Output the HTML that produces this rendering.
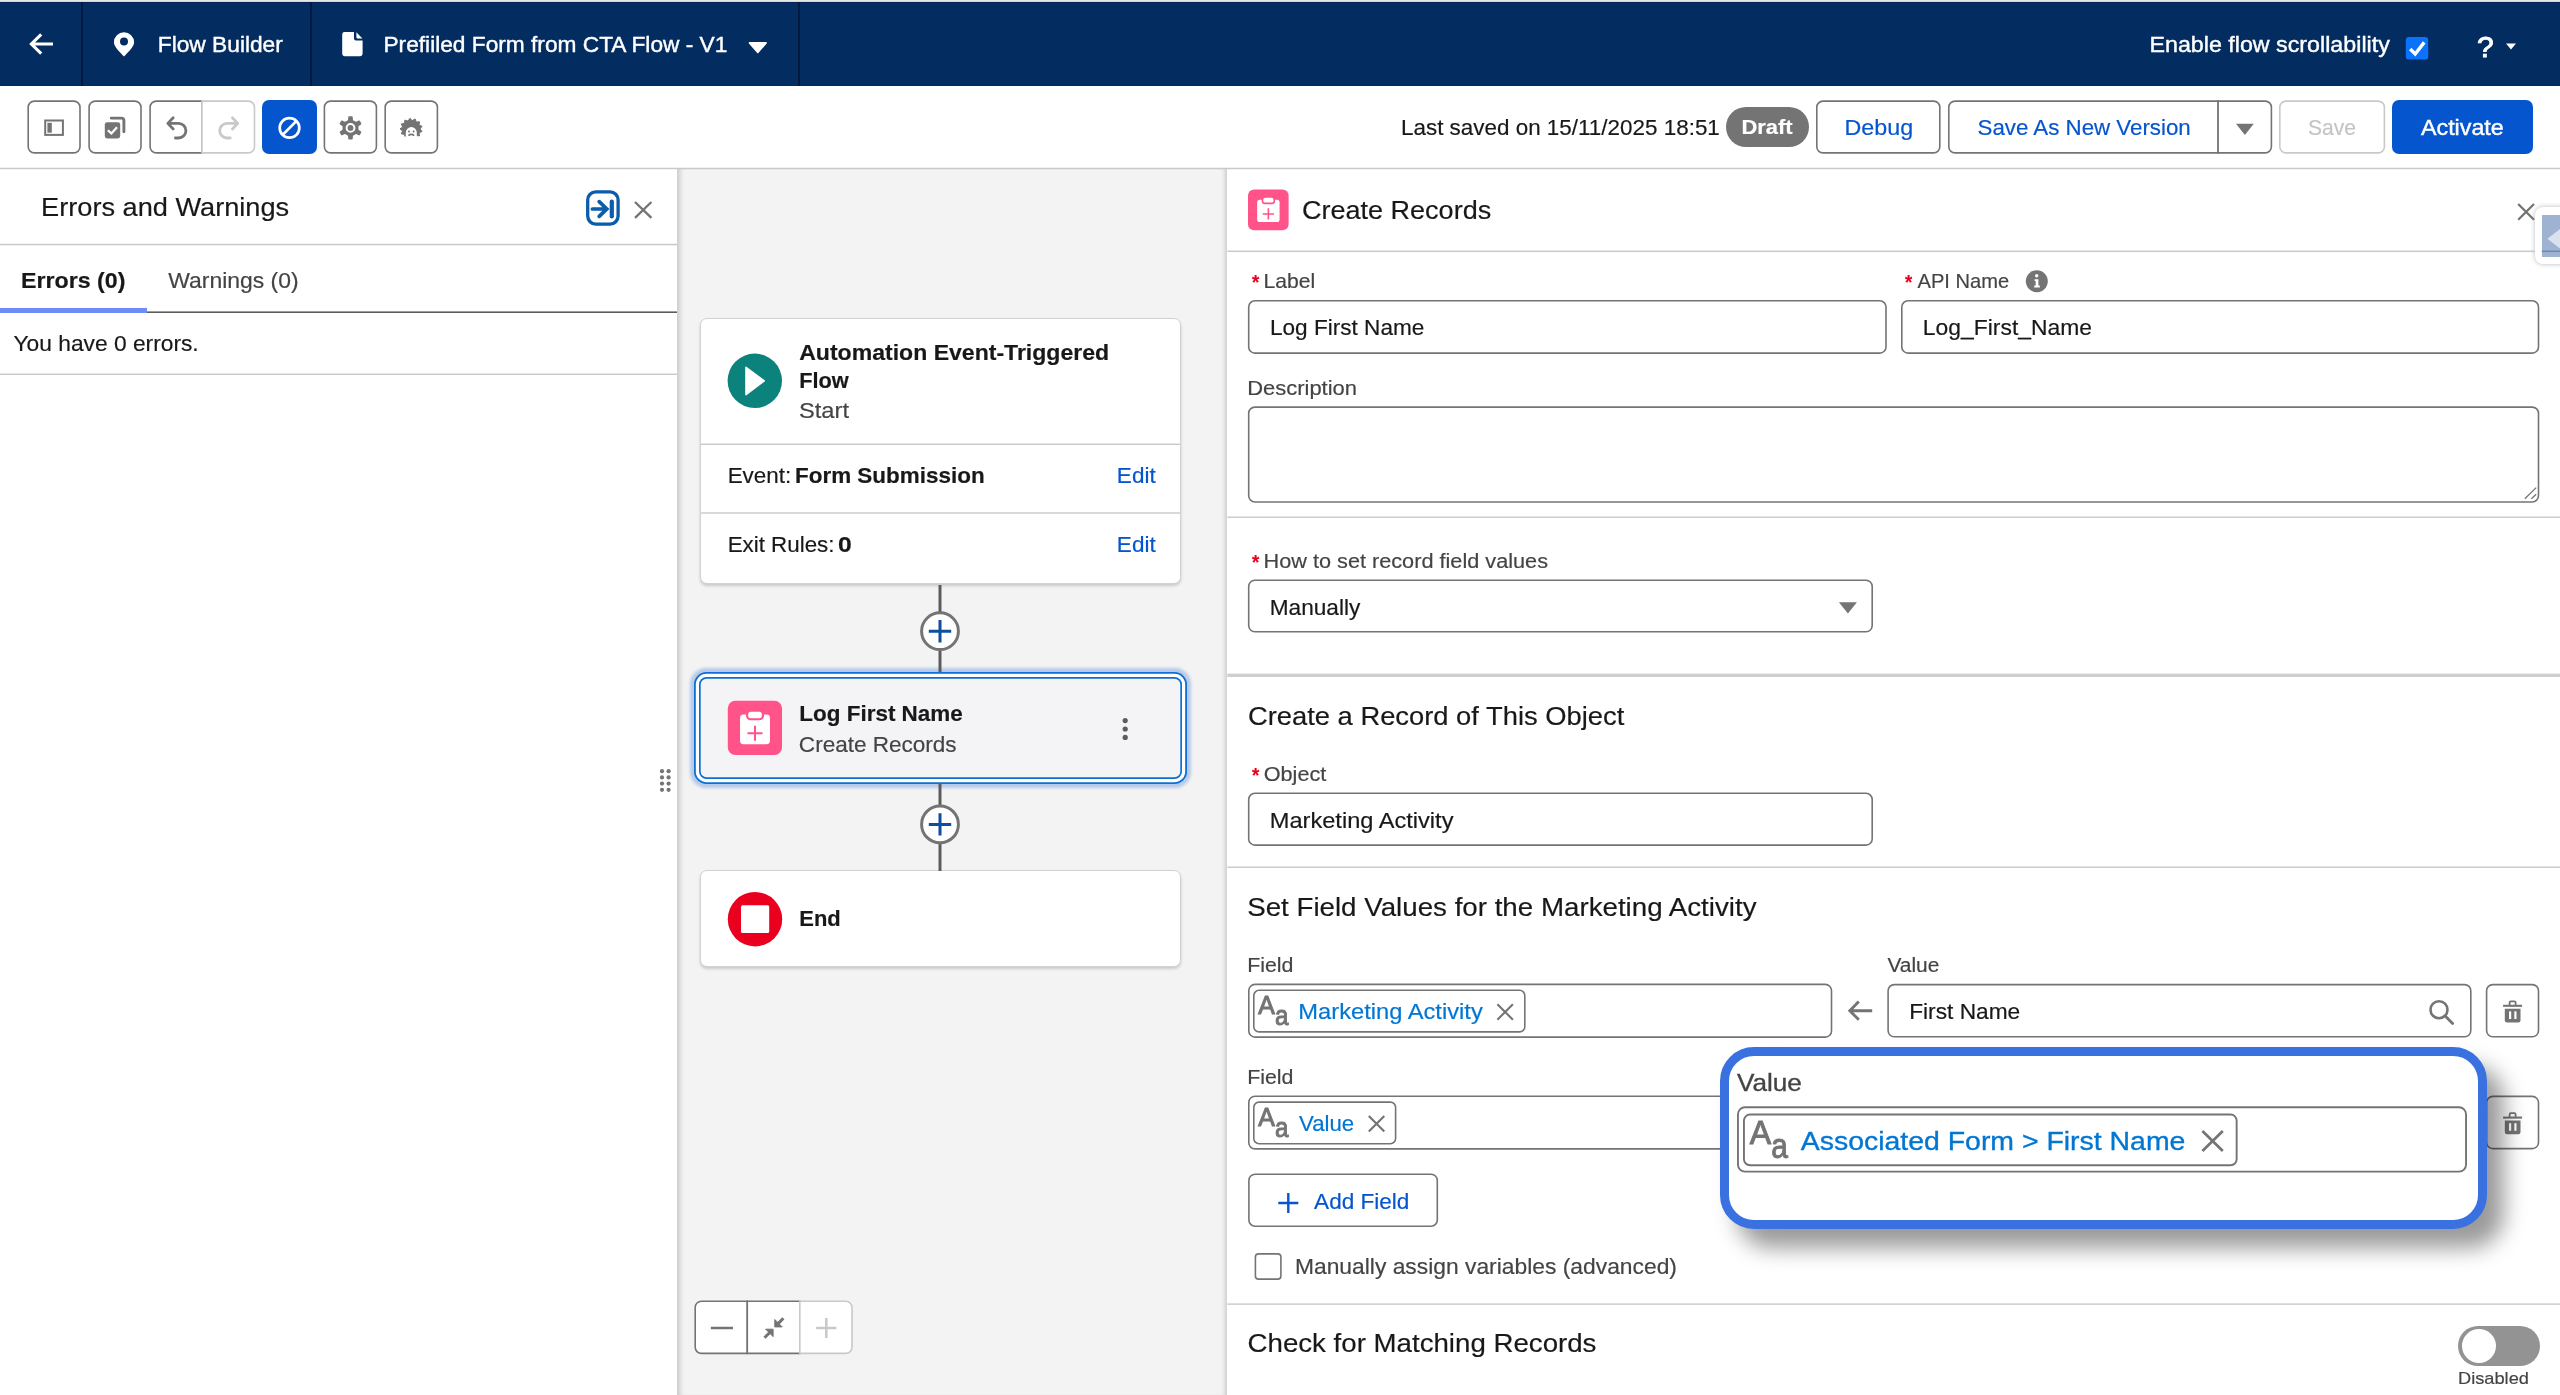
<!DOCTYPE html>
<html lang="en"><head><meta charset="utf-8"><title>Flow Builder</title>
<style>

html,body{margin:0;padding:0;background:#fff}
body{width:2560px;height:1395px;overflow:hidden;font-family:"Liberation Sans",sans-serif}
#root{position:relative;width:2560px;height:1395px;overflow:hidden;background:#fff}
.a{position:absolute;box-sizing:border-box}
.t{position:absolute;white-space:nowrap;transform-origin:0 0;display:block;will-change:transform;-webkit-text-stroke:.18px currentColor}
.ov{position:absolute;left:0;top:0;pointer-events:none}
.tx{font-family:"Liberation Sans",sans-serif;will-change:transform}
.tx text{white-space:pre}
.ln{position:absolute;background:#c9c9c9}
.inp,.btn{position:absolute;box-sizing:border-box;border-radius:7px;background:#fff;--bc:#747474;--bw:1.6px;box-shadow:inset 0 0 0 var(--bw) var(--bc)}
.card{position:absolute;box-sizing:border-box;background:#fff;border:1px solid #d2d2d2;border-radius:7px;box-shadow:0 2px 3px rgba(0,0,0,.17)}

</style></head>
<body>
<div id="root">
<div class="a" style="left:0px;top:0px;width:2560.00px;height:86.00px;background:#032d60"></div>
<div class="a" style="left:0px;top:0px;width:2560.00px;height:2.00px;background:linear-gradient(#e6e6e4 0,#e6e6e4 70%,#7f8ea8 100%)"></div>
<div class="a" style="left:0px;top:2px;width:2560.00px;height:1.00px;background:#01235a"></div>
<div class="a" style="left:81px;top:2px;width:2.00px;height:84.00px;background:#01183f"></div>
<div class="a" style="left:309.6px;top:2px;width:2.00px;height:84.00px;background:#01183f"></div>
<div class="a" style="left:797.6px;top:2px;width:2.00px;height:84.00px;background:#01183f"></div>







<div class="a" style="left:262.4px;top:99.9px;width:54.30px;height:54.20px;background:#0555ce;border-radius:7px"></div>
<div class="a" style="left:1726px;top:106.8px;width:82.80px;height:40.20px;background:#747474;border-radius:21px"></div>




<div class="a" style="left:2392.4px;top:99.9px;width:140.60px;height:54.20px;background:#0555ce;border-radius:7px"></div>


<div class="a" style="left:0px;top:308px;width:147.00px;height:5.20px;background:#6f8cf6"></div>

<div class="a" style="left:677px;top:168.6px;width:550.40px;height:1226.40px;background:#f3f3f3;box-shadow:inset 7px 0 5px -4px rgba(0,0,0,.17),inset -5px 0 4px -3px rgba(0,0,0,.17)"></div>
<div class="card" style="left:700px;top:317.8px;width:481.00px;height:266.40px;"></div>


<div class="a" style="left:699.2px;top:677px;width:483.00px;height:102.00px;background:#f4f4f7;border-radius:7.5px;box-shadow:inset 0 0 0 1.7px #0b6fd3,0 0 0 3.2px #fff,0 0 0 5px #0b6fd3,0 0 3px 8.6px rgba(45,110,215,.3)"></div>
<div class="card" style="left:700px;top:870.4px;width:481.00px;height:96.20px;"></div>
























<div class="a" style="left:2458px;top:1325.6px;width:81.80px;height:40.20px;background:#939393;border-radius:21px"></div>
<div class="a" style="left:2461.6px;top:1328.6px;width:34.40px;height:34.20px;background:#fff;border-radius:50%"></div>
<div class="a" style="left:2534.8px;top:206.8px;width:45.20px;height:57.40px;background:#fff;border-radius:8px;box-shadow:0 0 5px rgba(0,0,0,.28)"></div>
<div class="a" style="left:2541.6px;top:215px;width:18.40px;height:41.60px;background:rgba(120,148,192,.72)"></div>
<svg class="ov" width="2560" height="1395" viewBox="0 0 2560 1395">
<rect x="0" y="167.75" width="2560" height="1.5" fill="#c9c9c9"/>
<rect x="0" y="243.8" width="677" height="1.5" fill="#c9c9c9"/>
<rect x="147" y="311.4" width="530" height="1.6" fill="#5c5c5c"/>
<rect x="0" y="373.6" width="677" height="1.4" fill="#c9c9c9"/>
<rect x="701" y="443.6" width="479" height="1.4" fill="#c9c9c9"/>
<rect x="701" y="512.3" width="479" height="1.4" fill="#c9c9c9"/>
<rect x="1227.4" y="250.55" width="1307.6" height="1.5" fill="#c9c9c9"/>
<rect x="2541.6" y="250.55" width="18.40000000000009" height="1.5" fill="rgba(60,85,130,.45)"/>
<rect x="1227.4" y="516.5" width="1332.6" height="1.4" fill="#c9c9c9"/>
<rect x="1227.4" y="673.6" width="1332.6" height="3.4" fill="#cfcfcf"/>
<rect x="1227.4" y="866.5" width="1332.6" height="1.4" fill="#c9c9c9"/>
<rect x="1227.4" y="1303.4" width="1332.6" height="1.4" fill="#c9c9c9"/>
<path d="M34.40 101.10H73.80A6.2 6.2 0 0 1 80.00 107.30V146.70A6.2 6.2 0 0 1 73.80 152.90H34.40A6.2 6.2 0 0 1 28.20 146.70V107.30A6.2 6.2 0 0 1 34.40 101.10Z" fill="#fff" stroke="#747474" stroke-width="1.6"/>
<path d="M95.30 101.10H134.80A6.2 6.2 0 0 1 141.00 107.30V146.70A6.2 6.2 0 0 1 134.80 152.90H95.30A6.2 6.2 0 0 1 89.10 146.70V107.30A6.2 6.2 0 0 1 95.30 101.10Z" fill="#fff" stroke="#747474" stroke-width="1.6"/>
<path d="M330.60 101.10H370.20A6.2 6.2 0 0 1 376.40 107.30V146.70A6.2 6.2 0 0 1 370.20 152.90H330.60A6.2 6.2 0 0 1 324.40 146.70V107.30A6.2 6.2 0 0 1 330.60 101.10Z" fill="#fff" stroke="#747474" stroke-width="1.6"/>
<path d="M391.40 101.10H431.20A6.2 6.2 0 0 1 437.40 107.30V146.70A6.2 6.2 0 0 1 431.20 152.90H391.40A6.2 6.2 0 0 1 385.20 146.70V107.30A6.2 6.2 0 0 1 391.40 101.10Z" fill="#fff" stroke="#747474" stroke-width="1.6"/>
<path d="M156.30 101.10H201.90V152.90H156.30A6.2 6.2 0 0 1 150.10 146.70V107.30A6.2 6.2 0 0 1 156.30 101.10Z" fill="#fff" stroke="#747474" stroke-width="1.6"/>
<path d="M201.90 101.10H248.30A6.2 6.2 0 0 1 254.50 107.30V146.70A6.2 6.2 0 0 1 248.30 152.90H201.90V101.10Z" fill="#fff" stroke="#c9c9c9" stroke-width="1.6"/>
<path d="M1823.00 101.10H1933.60A6.2 6.2 0 0 1 1939.80 107.30V146.70A6.2 6.2 0 0 1 1933.60 152.90H1823.00A6.2 6.2 0 0 1 1816.80 146.70V107.30A6.2 6.2 0 0 1 1823.00 101.10Z" fill="#fff" stroke="#747474" stroke-width="1.6"/>
<path d="M1955.00 101.10H2218.10V152.90H1955.00A6.2 6.2 0 0 1 1948.80 146.70V107.30A6.2 6.2 0 0 1 1955.00 101.10Z" fill="#fff" stroke="#747474" stroke-width="1.6"/>
<path d="M2218.10 101.10H2265.20A6.2 6.2 0 0 1 2271.40 107.30V146.70A6.2 6.2 0 0 1 2265.20 152.90H2218.10V101.10Z" fill="#fff" stroke="#747474" stroke-width="1.6"/>
<path d="M2286.00 101.10H2378.20A6.2 6.2 0 0 1 2384.40 107.30V146.70A6.2 6.2 0 0 1 2378.20 152.90H2286.00A6.2 6.2 0 0 1 2279.80 146.70V107.30A6.2 6.2 0 0 1 2286.00 101.10Z" fill="#fff" stroke="#c9c9c9" stroke-width="1.6"/>
<path d="M701.40 1301.20H747.30V1353.40H701.40A6.2 6.2 0 0 1 695.20 1347.20V1307.40A6.2 6.2 0 0 1 701.40 1301.20Z" fill="#fff" stroke="#747474" stroke-width="1.6"/>
<path d="M747.30 1301.20H799.80V1353.40H747.30V1301.20Z" fill="#fff" stroke="#747474" stroke-width="1.6"/>
<path d="M799.80 1301.20H845.80A6.2 6.2 0 0 1 852.00 1307.40V1347.20A6.2 6.2 0 0 1 845.80 1353.40H799.80V1301.20Z" fill="#fff" stroke="#c9c9c9" stroke-width="1.6"/>
<path d="M1254.90 300.80H1879.80A6.2 6.2 0 0 1 1886.00 307.00V346.90A6.2 6.2 0 0 1 1879.80 353.10H1254.90A6.2 6.2 0 0 1 1248.70 346.90V307.00A6.2 6.2 0 0 1 1254.90 300.80Z" fill="#fff" stroke="#747474" stroke-width="1.6"/>
<path d="M1908.00 300.80H2532.30A6.2 6.2 0 0 1 2538.50 307.00V346.90A6.2 6.2 0 0 1 2532.30 353.10H1908.00A6.2 6.2 0 0 1 1901.80 346.90V307.00A6.2 6.2 0 0 1 1908.00 300.80Z" fill="#fff" stroke="#747474" stroke-width="1.6"/>
<path d="M1254.90 407.10H2532.30A6.2 6.2 0 0 1 2538.50 413.30V495.80A6.2 6.2 0 0 1 2532.30 502.00H1254.90A6.2 6.2 0 0 1 1248.70 495.80V413.30A6.2 6.2 0 0 1 1254.90 407.10Z" fill="#fff" stroke="#747474" stroke-width="1.6"/>
<path d="M1254.90 580.20H1866.00A6.2 6.2 0 0 1 1872.20 586.40V625.60A6.2 6.2 0 0 1 1866.00 631.80H1254.90A6.2 6.2 0 0 1 1248.70 625.60V586.40A6.2 6.2 0 0 1 1254.90 580.20Z" fill="#fff" stroke="#747474" stroke-width="1.6"/>
<path d="M1254.90 793.30H1866.00A6.2 6.2 0 0 1 1872.20 799.50V838.90A6.2 6.2 0 0 1 1866.00 845.10H1254.90A6.2 6.2 0 0 1 1248.70 838.90V799.50A6.2 6.2 0 0 1 1254.90 793.30Z" fill="#fff" stroke="#747474" stroke-width="1.6"/>
<path d="M1255.00 984.40H1825.30A6.2 6.2 0 0 1 1831.50 990.60V1030.90A6.2 6.2 0 0 1 1825.30 1037.10H1255.00A6.2 6.2 0 0 1 1248.80 1030.90V990.60A6.2 6.2 0 0 1 1255.00 984.40Z" fill="#fff" stroke="#747474" stroke-width="1.6"/>
<path d="M1894.30 984.60H2464.60A6.2 6.2 0 0 1 2470.80 990.80V1030.60A6.2 6.2 0 0 1 2464.60 1036.80H1894.30A6.2 6.2 0 0 1 1888.10 1030.60V990.80A6.2 6.2 0 0 1 1894.30 984.60Z" fill="#fff" stroke="#747474" stroke-width="1.6"/>
<path d="M2492.80 984.60H2532.30A6.2 6.2 0 0 1 2538.50 990.80V1030.60A6.2 6.2 0 0 1 2532.30 1036.80H2492.80A6.2 6.2 0 0 1 2486.60 1030.60V990.80A6.2 6.2 0 0 1 2492.80 984.60Z" fill="#fff" stroke="#747474" stroke-width="1.6"/>
<path d="M1255.00 1096.20H1825.30A6.2 6.2 0 0 1 1831.50 1102.40V1142.70A6.2 6.2 0 0 1 1825.30 1148.90H1255.00A6.2 6.2 0 0 1 1248.80 1142.70V1102.40A6.2 6.2 0 0 1 1255.00 1096.20Z" fill="#fff" stroke="#747474" stroke-width="1.6"/>
<path d="M1894.30 1096.40H2464.60A6.2 6.2 0 0 1 2470.80 1102.60V1142.40A6.2 6.2 0 0 1 2464.60 1148.60H1894.30A6.2 6.2 0 0 1 1888.10 1142.40V1102.60A6.2 6.2 0 0 1 1894.30 1096.40Z" fill="#fff" stroke="#747474" stroke-width="1.6"/>
<path d="M2492.80 1096.40H2532.30A6.2 6.2 0 0 1 2538.50 1102.60V1142.40A6.2 6.2 0 0 1 2532.30 1148.60H2492.80A6.2 6.2 0 0 1 2486.60 1142.40V1102.60A6.2 6.2 0 0 1 2492.80 1096.40Z" fill="#fff" stroke="#747474" stroke-width="1.6"/>
<path d="M1259.00 990.30H1519.60A5.2 5.2 0 0 1 1524.80 995.50V1026.70A5.2 5.2 0 0 1 1519.60 1031.90H1259.00A5.2 5.2 0 0 1 1253.80 1026.70V995.50A5.2 5.2 0 0 1 1259.00 990.30Z" fill="#fff" stroke="#747474" stroke-width="1.6"/>
<path d="M1259.00 1102.10H1390.40A5.2 5.2 0 0 1 1395.60 1107.30V1138.50A5.2 5.2 0 0 1 1390.40 1143.70H1259.00A5.2 5.2 0 0 1 1253.80 1138.50V1107.30A5.2 5.2 0 0 1 1259.00 1102.10Z" fill="#fff" stroke="#747474" stroke-width="1.6"/>
<path d="M1255.10 1174.20H1431.10A6.2 6.2 0 0 1 1437.30 1180.40V1220.00A6.2 6.2 0 0 1 1431.10 1226.20H1255.10A6.2 6.2 0 0 1 1248.90 1220.00V1180.40A6.2 6.2 0 0 1 1255.10 1174.20Z" fill="#fff" stroke="#747474" stroke-width="1.6"/>
<path d="M1258.60 1253.90H1277.70A3.2 3.2 0 0 1 1280.90 1257.10V1275.90A3.2 3.2 0 0 1 1277.70 1279.10H1258.60A3.2 3.2 0 0 1 1255.40 1275.90V1257.10A3.2 3.2 0 0 1 1258.60 1253.90Z" fill="#fff" stroke="#747474" stroke-width="1.6"/>
<path d="M53 44H31M41.2 34.4L31.4 44L41.2 53.6" stroke="#fff" stroke-width="3.1" fill="none" stroke-linejoin="miter"/>
<path fill="#fff" fill-rule="evenodd" d="M124 56.4C121 53.2 113.9 46.6 113.9 42.4A10.1 10.1 0 0 1 134.1 42.4C134.1 46.6 127 53.2 124 56.4ZM124 37.6a4 4 0 1 0 0 8a4 4 0 1 0 0-8Z"/>
<path fill="#fff" d="M344.6 32h9.4v6.6a2 2 0 0 0 2 2h6.6v13.2a2.4 2.4 0 0 1-2.4 2.4h-15.6a2.4 2.4 0 0 1-2.4-2.4v-19.4a2.4 2.4 0 0 1 2.4-2.4ZM356.4 32.2l6 6.2h-4.8a1.2 1.2 0 0 1-1.2-1.2Z"/>
<path fill="#fff" d="M749.6 42h16.4a.9.9 0 0 1 .7 1.5l-8.1 9.3a1 1 0 0 1-1.6 0l-8.1-9.3a.9.9 0 0 1 .7-1.5Z"/>
<rect x="2405.8" y="37" width="22.4" height="22.6" rx="3.2" fill="#0b72fb"/>
<path d="M2410.2 49L2415.2 54L2424.2 42.4" stroke="#fff" stroke-width="3.4" fill="none"/>
<path fill="#fff" d="M2506 43.6h10l-5 6Z"/>
<rect x="45.2" y="120.5" width="17.7" height="14.4" fill="none" stroke="#747474" stroke-width="2"/>
<rect x="47.4" y="122.8" width="4.4" height="9.9" fill="#747474"/>
<path d="M111.2 118.1H121.3A2.6 2.6 0 0 1 123.9 120.7V131.8" stroke="#747474" stroke-width="2.9" fill="none" stroke-linecap="round"/>
<rect x="104.8" y="122.2" width="15.4" height="16.2" rx="2.4" fill="#747474"/>
<path d="M107.8 130.2L111.4 133.4L117 127.2" stroke="#fff" stroke-width="2.2" fill="none"/>
<path d="M173.2 117.8L167.8 123.4L173.2 129M168.4 123.4H178.6A7.3 7.3 0 0 1 178.6 138H175.4" stroke="#747474" stroke-width="2.8" fill="none" stroke-linecap="round" stroke-linejoin="round"/>
<path d="M232.4 117.8L237.8 123.4L232.4 129M237.2 123.4H227A7.3 7.3 0 0 0 227 138H230.2" stroke="#c9c9c9" stroke-width="2.8" fill="none" stroke-linecap="round" stroke-linejoin="round"/>
<circle cx="289.5" cy="127.9" r="9.8" fill="none" stroke="#fff" stroke-width="2.7"/>
<path d="M282.7 134.7L296.3 121.1" stroke="#fff" stroke-width="2.7"/>
<path d="M348.79 120.60L349.08 117.09L351.92 117.09L352.21 120.60L355.97 122.77L359.15 121.26L360.57 123.73L357.68 125.73L357.68 130.07L360.57 132.07L359.15 134.54L355.97 133.03L352.21 135.20L351.92 138.71L349.08 138.71L348.79 135.20L345.03 133.03L341.85 134.54L340.43 132.07L343.32 130.07L343.32 125.73L340.43 123.73L341.85 121.26L345.03 122.77Z" fill="#747474" stroke="#747474" stroke-width="1.6" stroke-linejoin="round"/>
<circle cx="350.5" cy="127.9" r="3.9" fill="none" stroke="#fff" stroke-width="2"/>
<path d="M400.00 128.90L402.66 126.90L401.28 123.96L404.61 123.36L404.84 120.14L408.08 121.08L409.85 118.34L412.26 120.60L415.17 118.95L416.20 122.02L419.58 121.84L418.99 125.01L422.07 126.35L420.00 128.90L422.07 131.45L418.99 132.79L419.58 135.96L416.20 135.78L415.17 136.50L412.26 136.50L409.85 136.50L408.08 136.50L404.84 136.50L404.61 134.44L401.28 133.84L402.66 130.90Z" fill="#747474" stroke="#747474" stroke-width="1" stroke-linejoin="round"/>
<path d="M405.8 137V132.4A5.5 5.3 0 0 1 416.8 132.4V137Z" fill="#fff"/>
<circle cx="409" cy="131.6" r="1" fill="#747474"/><circle cx="413.6" cy="131.6" r="1" fill="#747474"/>
<path d="M408.4 135.6Q411.3 133.2 414.2 135.6" stroke="#747474" stroke-width="1.5" fill="none"/>
<rect x="399" y="136.6" width="25" height="4" fill="#fff"/>
<path fill="#747474" d="M2236 123.8h17.8l-8.9 11.2Z"/>
<rect x="587.7" y="191.9" width="30.4" height="32.2" rx="8" fill="none" stroke="#0b5cab" stroke-width="3.3"/>
<path d="M592.4 209H606M599.2 201.6L606.8 209L599.2 216.4" stroke="#0b5cab" stroke-width="3.7" fill="none" stroke-linecap="round" stroke-linejoin="miter"/>
<path d="M611.8 201.6V216.4" stroke="#0b5cab" stroke-width="4.2" stroke-linecap="round"/>
<path d="M635 202L651.4 217.8M651.4 202L635 217.8" stroke="#747474" stroke-width="2.3" fill="none" stroke-linecap="butt"/>
<circle cx="754.8" cy="380.8" r="27.2" fill="#0b827c"/>
<path d="M746 367.4L764.2 380.9L746 394.6Z" fill="#fff" stroke="#fff" stroke-width="1.6" stroke-linejoin="round"/>
<path d="M940 585V612" stroke="#5c5c5c" stroke-width="3"/>
<path d="M940 651V672" stroke="#5c5c5c" stroke-width="3"/>
<path d="M940 784V805" stroke="#5c5c5c" stroke-width="3"/>
<path d="M940 844V871" stroke="#5c5c5c" stroke-width="3"/>
<circle cx="940" cy="631.2" r="18.4" fill="#fff" stroke="#747474" stroke-width="3"/>
<path d="M928.8 631.2H951.2M940 620.0V642.4000000000001" stroke="#0b4f9e" stroke-width="3"/>
<circle cx="940" cy="824.4" r="18.4" fill="#fff" stroke="#747474" stroke-width="3"/>
<path d="M928.8 824.4H951.2M940 813.1999999999999V835.6" stroke="#0b4f9e" stroke-width="3"/>
<g transform="translate(727.8 700.8)"><rect width="54.2" height="54.2" rx="7.52" fill="#ff538a"/><rect x="12.25" y="13.65" width="29.91" height="29.71" rx="3.41" fill="#fff"/><rect x="19.27" y="9.84" width="15.86" height="8.63" rx="3.61" fill="#fff" stroke="#ff538a" stroke-width="2.21"/><path d="M19.67 32.52H34.73M27.20 24.99V40.05" stroke="#ff538a" stroke-width="2.01"/></g>
<circle cx="1125.2" cy="720.6" r="2.6" fill="#5c5c5c"/>
<circle cx="1125.2" cy="729" r="2.6" fill="#5c5c5c"/>
<circle cx="1125.2" cy="737.4" r="2.6" fill="#5c5c5c"/>
<circle cx="662" cy="771.2" r="2.1" fill="#747474"/>
<circle cx="662" cy="777.4" r="2.1" fill="#747474"/>
<circle cx="662" cy="783.6" r="2.1" fill="#747474"/>
<circle cx="662" cy="789.8" r="2.1" fill="#747474"/>
<circle cx="668.6" cy="771.2" r="2.1" fill="#747474"/>
<circle cx="668.6" cy="777.4" r="2.1" fill="#747474"/>
<circle cx="668.6" cy="783.6" r="2.1" fill="#747474"/>
<circle cx="668.6" cy="789.8" r="2.1" fill="#747474"/>
<circle cx="755" cy="919.2" r="27.2" fill="#ea001e"/>
<rect x="741" y="905.2" width="28.2" height="27.8" rx="1.5" fill="#fff"/>
<path d="M710.8 1328H733" stroke="#747474" stroke-width="2.5"/>
<path d="M774.8 1319.5V1326.9H782.2Z" fill="#747474" stroke="#747474" stroke-width="1" stroke-linejoin="round"/>
<path d="M777.6 1324.1L783.4 1318.3" stroke="#747474" stroke-width="3"/>
<path d="M773.1 1336.6V1329.2H765.7Z" fill="#747474" stroke="#747474" stroke-width="1" stroke-linejoin="round"/>
<path d="M770.3 1332L764.5 1337.8" stroke="#747474" stroke-width="3"/>
<path d="M816.2 1328H836.4M826.3 1317.9V1338.1" stroke="#c9c9c9" stroke-width="2.5"/>
<g transform="translate(1248 189.6)"><rect width="40.6" height="40.6" rx="6.01" fill="#ff538a"/><rect x="9.17" y="10.23" width="22.41" height="22.25" rx="2.56" fill="#fff"/><rect x="14.44" y="7.37" width="11.88" height="6.47" rx="2.71" fill="#fff" stroke="#ff538a" stroke-width="1.65"/><path d="M14.74 24.36H26.01M20.38 18.72V30.00" stroke="#ff538a" stroke-width="1.60"/></g>
<path d="M2518.2 204L2534 219.8M2534 204L2518.2 219.8" stroke="#747474" stroke-width="2.3" fill="none" stroke-linecap="butt"/>
<circle cx="2036.8" cy="281.2" r="11" fill="#747474"/>
<path d="M2034.6 279.2h3.8v6.4h1.4v1.8h-5.6v-1.8h1.5v-4.6h-1.1Z" fill="#fff"/><circle cx="2036.7" cy="275.8" r="1.7" fill="#fff"/>
<path fill="#747474" d="M1838.9 602.3h18l-9 11.2Z"/>
<path d="M2524.8 498.8L2536.2 487.6M2531.4 498.8L2536.2 494.2" stroke="#747474" stroke-width="1.3"/>
<path d="M2547.4 238.7L2560 229V248.4Z" fill="rgba(255,255,255,.62)"/>
<path d="M1497.4 1004.2L1512.9 1019.7M1512.9 1004.2L1497.4 1019.7" stroke="#747474" stroke-width="2.1" fill="none" stroke-linecap="butt"/>
<path d="M1368.8 1116L1384.3 1131.5M1384.3 1116L1368.8 1131.5" stroke="#747474" stroke-width="2.1" fill="none" stroke-linecap="butt"/>
<path d="M1872.2 1010.7H1850.4M1858.8 1001.6L1849.8 1010.7L1858.8 1019.8" stroke="#747474" stroke-width="2.9" fill="none"/>
<circle cx="2439" cy="1009.7" r="8.5" fill="none" stroke="#747474" stroke-width="2.6"/><path d="M2445.2 1016L2452.6 1023.4" stroke="#747474" stroke-width="2.8" stroke-linecap="round"/>
<g transform="translate(0 0)"><path d="M2503.1 1005.8H2522.1" stroke="#747474" stroke-width="2.1"/><path d="M2509.6 1005.4V1002.6a1.2 1.2 0 0 1 1.2-1.2h3.6a1.2 1.2 0 0 1 1.2 1.2V1005.4" stroke="#747474" stroke-width="1.8" fill="none"/><path d="M2504.8 1008.8H2520.5V1020.2a2.2 2.2 0 0 1-2.2 2.2H2507a2.2 2.2 0 0 1-2.2-2.2Z" fill="#747474"/><rect x="2509" y="1011.4" width="2.2" height="7.6" fill="#fff"/><rect x="2514.3" y="1011.4" width="2.2" height="7.6" fill="#fff"/></g>
<g transform="translate(0 111.8)"><path d="M2503.1 1005.8H2522.1" stroke="#747474" stroke-width="2.1"/><path d="M2509.6 1005.4V1002.6a1.2 1.2 0 0 1 1.2-1.2h3.6a1.2 1.2 0 0 1 1.2 1.2V1005.4" stroke="#747474" stroke-width="1.8" fill="none"/><path d="M2504.8 1008.8H2520.5V1020.2a2.2 2.2 0 0 1-2.2 2.2H2507a2.2 2.2 0 0 1-2.2-2.2Z" fill="#747474"/><rect x="2509" y="1011.4" width="2.2" height="7.6" fill="#fff"/><rect x="2514.3" y="1011.4" width="2.2" height="7.6" fill="#fff"/></g>
<path d="M1278.3 1203H1298.3M1288.3 1193V1213" stroke="#0555ce" stroke-width="2.4"/>
</svg>
<svg class="ov tx" width="2560" height="1395" viewBox="0 0 2560 1395">
<text transform="translate(157.77 52.05) scale(1.0341 1)" font-size="22" fill="#ffffff" stroke="#ffffff" stroke-width="0.4">Flow Builder</text>
<text transform="translate(383.47 52.05) scale(1.0324 1)" font-size="22" fill="#ffffff" stroke="#ffffff" stroke-width="0.4">Prefiiled Form from CTA Flow - V1</text>
<text transform="translate(2149.44 52.05) scale(1.0577 1)" font-size="22" fill="#ffffff" stroke="#ffffff" stroke-width="0.4">Enable flow scrollability</text>
<text transform="translate(2476.96 57.45) scale(1.0429 1)" font-size="28.8" fill="#ffffff" stroke="#ffffff" stroke-width="0.9">?</text>
<text transform="translate(1400.96 135.05) scale(1.0389 1)" font-size="21.6" fill="#181818" stroke="#181818" stroke-width="0.18">Last saved on 15/11/2025 18:51</text>
<text transform="translate(1741.40 134.05) scale(1.0976 1)" font-size="20" fill="#ffffff" stroke="#ffffff" stroke-width="0.18" font-weight="700">Draft</text>
<text transform="translate(1844.42 135.05) scale(1.0792 1)" font-size="21.6" fill="#0555ce" stroke="#0555ce" stroke-width="0.18">Debug</text>
<text transform="translate(1977.50 135.05) scale(1.0332 1)" font-size="21.6" fill="#0555ce" stroke="#0555ce" stroke-width="0.18">Save As New Version</text>
<text transform="translate(2308.00 135.05) scale(0.9754 1)" font-size="21.6" fill="#c4c4c4" stroke="#c4c4c4" stroke-width="0.18">Save</text>
<text transform="translate(2421.00 135.05) scale(1.0781 1)" font-size="21.6" fill="#ffffff" stroke="#ffffff" stroke-width="0.4">Activate</text>
<text transform="translate(41.06 216.10) scale(1.0221 1)" font-size="26.6" fill="#181818" stroke="#181818" stroke-width="0.18">Errors and Warnings</text>
<text transform="translate(21.03 287.80) scale(1.0749 1)" font-size="21.6" fill="#181818" stroke="#181818" stroke-width="0.18" font-weight="700">Errors (0)</text>
<text transform="translate(168.20 287.90) scale(1.0625 1)" font-size="21.6" fill="#444444" stroke="#444444" stroke-width="0.18">Warnings (0)</text>
<text transform="translate(13.50 351.00) scale(1.0540 1)" font-size="21.6" fill="#181818" stroke="#181818" stroke-width="0.18">You have 0 errors.</text>
<text transform="translate(799.20 360.00) scale(1.0680 1)" font-size="21.6" fill="#181818" stroke="#181818" stroke-width="0.18" font-weight="700">Automation Event-Triggered</text>
<text transform="translate(799.19 387.90) scale(1.0087 1)" font-size="21.6" fill="#181818" stroke="#181818" stroke-width="0.18" font-weight="700">Flow</text>
<text transform="translate(799.00 418.10) scale(1.0964 1)" font-size="21.6" fill="#444444" stroke="#444444" stroke-width="0.18">Start</text>
<text transform="translate(727.66 483.20) scale(1.0385 1)" font-size="21.6" fill="#181818" stroke="#181818" stroke-width="0.18">Event:</text>
<text transform="translate(794.96 483.20) scale(1.0407 1)" font-size="21.6" fill="#181818" stroke="#181818" stroke-width="0.18" font-weight="700">Form Submission</text>
<text transform="translate(1116.86 483.20) scale(1.0439 1)" font-size="21.6" fill="#0555ce" stroke="#0555ce" stroke-width="0.18">Edit</text>
<text transform="translate(727.66 551.80) scale(1.0355 1)" font-size="21.6" fill="#181818" stroke="#181818" stroke-width="0.18">Exit Rules:</text>
<text transform="translate(838.00 551.80) scale(1.1417 1)" font-size="21.6" fill="#181818" stroke="#181818" stroke-width="0.18" font-weight="700">0</text>
<text transform="translate(1116.86 551.80) scale(1.0439 1)" font-size="21.6" fill="#0555ce" stroke="#0555ce" stroke-width="0.18">Edit</text>
<text transform="translate(799.26 721.45) scale(1.0412 1)" font-size="21.6" fill="#181818" stroke="#181818" stroke-width="0.18" font-weight="700">Log First Name</text>
<text transform="translate(798.86 752.15) scale(1.0437 1)" font-size="21.6" fill="#444444" stroke="#444444" stroke-width="0.18">Create Records</text>
<text transform="translate(799.28 926.15) scale(1.0157 1)" font-size="21.6" fill="#181818" stroke="#181818" stroke-width="0.18" font-weight="700">End</text>
<text transform="translate(1301.88 219.45) scale(1.0166 1)" font-size="26.6" fill="#181818" stroke="#181818" stroke-width="0.18">Create Records</text>
<text transform="translate(1251.90 288.95) scale(0.9250 1)" font-size="20" fill="#ea001e" stroke="#ea001e" stroke-width="0.18" font-weight="700">*</text>
<text transform="translate(1263.54 288.25) scale(1.0570 1)" font-size="20" fill="#444444" stroke="#444444" stroke-width="0.18">Label</text>
<text transform="translate(1905.00 288.95) scale(0.9250 1)" font-size="20" fill="#ea001e" stroke="#ea001e" stroke-width="0.18" font-weight="700">*</text>
<text transform="translate(1917.50 288.25) scale(1.0053 1)" font-size="20" fill="#444444" stroke="#444444" stroke-width="0.18">API Name</text>
<text transform="translate(1269.95 334.85) scale(1.0464 1)" font-size="21.6" fill="#181818" stroke="#181818" stroke-width="0.18">Log First Name</text>
<text transform="translate(1922.84 334.85) scale(1.0598 1)" font-size="21.6" fill="#181818" stroke="#181818" stroke-width="0.18">Log_First_Name</text>
<text transform="translate(1247.20 394.75) scale(1.0979 1)" font-size="20" fill="#444444" stroke="#444444" stroke-width="0.18">Description</text>
<text transform="translate(1251.90 568.85) scale(0.9250 1)" font-size="20" fill="#ea001e" stroke="#ea001e" stroke-width="0.18" font-weight="700">*</text>
<text transform="translate(1263.52 568.15) scale(1.0844 1)" font-size="20" fill="#444444" stroke="#444444" stroke-width="0.18">How to set record field values</text>
<text transform="translate(1269.75 614.55) scale(1.0476 1)" font-size="21.6" fill="#181818" stroke="#181818" stroke-width="0.18">Manually</text>
<text transform="translate(1247.97 724.55) scale(1.0277 1)" font-size="26.6" fill="#181818" stroke="#181818" stroke-width="0.18">Create a Record of This Object</text>
<text transform="translate(1251.90 781.85) scale(0.9250 1)" font-size="20" fill="#ea001e" stroke="#ea001e" stroke-width="0.18" font-weight="700">*</text>
<text transform="translate(1263.70 781.15) scale(1.0833 1)" font-size="20" fill="#444444" stroke="#444444" stroke-width="0.18">Object</text>
<text transform="translate(1269.71 828.15) scale(1.0938 1)" font-size="21.6" fill="#181818" stroke="#181818" stroke-width="0.18">Marketing Activity</text>
<text transform="translate(1247.16 916.05) scale(1.0426 1)" font-size="26.6" fill="#181818" stroke="#181818" stroke-width="0.18">Set Field Values for the Marketing Activity</text>
<text transform="translate(1247.13 972.35) scale(1.0697 1)" font-size="20" fill="#444444" stroke="#444444" stroke-width="0.18">Field</text>
<text transform="translate(1887.40 972.25) scale(1.0455 1)" font-size="20" fill="#444444" stroke="#444444" stroke-width="0.18">Value</text>
<text transform="translate(1258.20 1014.15) scale(0.9444 1)" font-size="26.3" fill="#747474" stroke="#747474" stroke-width="1.05">A</text>
<text transform="translate(1275.05 1025.05) scale(0.8467 1)" font-size="28.5" fill="#747474" stroke="#747474" stroke-width="1.05">a</text>
<text transform="translate(1298.30 1019.15) scale(1.0986 1)" font-size="21.6" fill="#0176d3" stroke="#0176d3" stroke-width="0.18">Marketing Activity</text>
<text transform="translate(1909.15 1019.15) scale(1.0529 1)" font-size="21.6" fill="#181818" stroke="#181818" stroke-width="0.18">First Name</text>
<text transform="translate(1247.13 1084.05) scale(1.0697 1)" font-size="20" fill="#444444" stroke="#444444" stroke-width="0.18">Field</text>
<text transform="translate(1258.20 1125.95) scale(0.9444 1)" font-size="26.3" fill="#747474" stroke="#747474" stroke-width="1.05">A</text>
<text transform="translate(1275.05 1136.85) scale(0.8467 1)" font-size="28.5" fill="#747474" stroke="#747474" stroke-width="1.05">a</text>
<text transform="translate(1299.00 1130.55) scale(1.0295 1)" font-size="21.6" fill="#0176d3" stroke="#0176d3" stroke-width="0.18">Value</text>
<text transform="translate(1314.10 1208.85) scale(1.0453 1)" font-size="21.6" fill="#0555ce" stroke="#0555ce" stroke-width="0.18">Add Field</text>
<text transform="translate(1294.94 1274.25) scale(1.0577 1)" font-size="21.6" fill="#444444" stroke="#444444" stroke-width="0.18">Manually assign variables (advanced)</text>
<text transform="translate(1247.56 1351.55) scale(1.0400 1)" font-size="26.6" fill="#181818" stroke="#181818" stroke-width="0.18">Check for Matching Records</text>
<text transform="translate(2458.00 1384.05) scale(1.0988 1)" font-size="16.6" fill="#444444" stroke="#444444" stroke-width="0.18">Disabled</text>
</svg>
<div class="a" style="left:1720.2px;top:1046.8px;width:766.40px;height:182.40px;background:#fff;border:9.4px solid #3a71e0;border-radius:34px;box-shadow:17px 19px 22px rgba(0,0,0,.4)"></div>


<svg class="ov" width="2560" height="1395" viewBox="0 0 2560 1395">
<path d="M1745.00 1107.25H2459.00A7.05 7.05 0 0 1 2466.05 1114.30V1164.60A7.05 7.05 0 0 1 2459.00 1171.65H1745.00A7.05 7.05 0 0 1 1737.95 1164.60V1114.30A7.05 7.05 0 0 1 1745.00 1107.25Z" fill="#fff" stroke="#747474" stroke-width="1.9"/>
<path d="M1750.00 1114.55H2230.60A6.05 6.05 0 0 1 2236.65 1120.60V1159.20A6.05 6.05 0 0 1 2230.60 1165.25H1750.00A6.05 6.05 0 0 1 1743.95 1159.20V1120.60A6.05 6.05 0 0 1 1750.00 1114.55Z" fill="#fff" stroke="#747474" stroke-width="1.9"/><path d="M2202.4 1131L2222.8 1151M2222.8 1131L2202.4 1151" stroke="#747474" stroke-width="2.7" fill="none" stroke-linecap="butt"/>
</svg>
<svg class="ov tx" width="2560" height="1395" viewBox="0 0 2560 1395">
<text transform="translate(1737.00 1091.45) scale(1.0716 1)" font-size="24.4" fill="#444444" stroke="#444444" stroke-width="0.35">Value</text>
<text transform="translate(1749.70 1144.05) scale(0.9727 1)" font-size="33" fill="#747474" stroke="#747474" stroke-width="1.0">A</text>
<text transform="translate(1771.16 1157.95) scale(0.8421 1)" font-size="35.5" fill="#747474" stroke="#747474" stroke-width="1.0">a</text>
<text transform="translate(1800.80 1149.55) scale(1.0692 1)" font-size="26.6" fill="#0176d3" stroke="#0176d3" stroke-width="0.35">Associated Form &gt; First Name</text>
</svg>
</div>
</body></html>
